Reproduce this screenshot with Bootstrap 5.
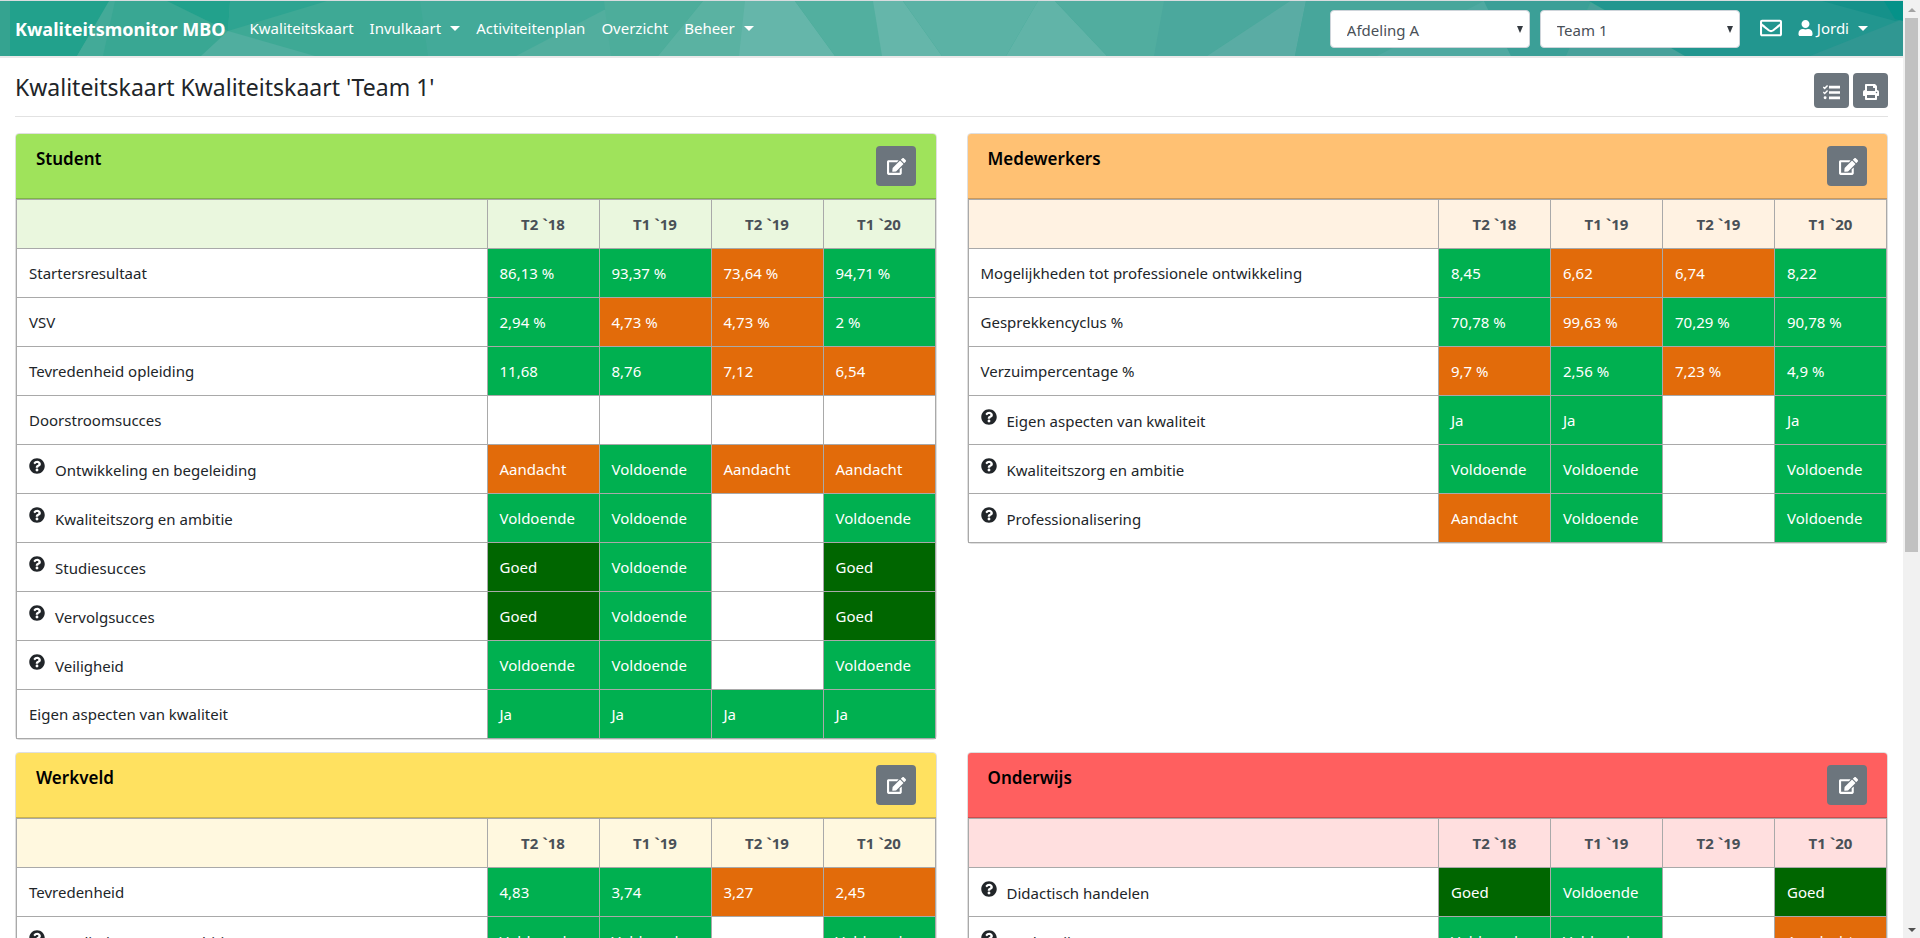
<!DOCTYPE html>
<html lang="nl">
<head>
<meta charset="utf-8">
<meta name="viewport" content="width=device-width, initial-scale=1">
<title>Kwaliteitsmonitor MBO</title>
<link href="https://cdn.jsdelivr.net/npm/bootstrap@5.3.0/dist/css/bootstrap.min.css" rel="stylesheet">
<style>
  body { font-family: "Noto Sans", "Open Sans", sans-serif; font-size: 15px; color: #212529; }
  .page-area { min-width: 0; overflow: hidden; }
  .topbar { background: #3ea995; border-top: 1px solid #d9dcdf; border-bottom: 2px solid #e9e9e9; padding: 9px 15px 8px; }
  .topbar-art { position: absolute; inset: 0; width: 100%; height: 100%; }
  .topbar .navbar-brand { font-size: 18px; line-height: 30px; font-weight: 700; padding: 0; margin-right: 24px; }
  .topbar .navbar-nav .nav-link { color: #fff; line-height: 24px; padding: 6px 0 8px; }
  .topbar .navbar-nav { gap: 16px; }
  .topbar .dropdown-toggle::after { border-width: 5px; border-bottom: 0; margin-left: 9px; vertical-align: 3px; }
  .user-icon { vertical-align: -2px; }
  .picker { width: 200px; height: 38px; padding: 2px 26px 0 16px; font-size: 15px; color: #495057; border-color: #ced4da; border-radius: 4px;
    background: #fff url("data:image/svg+xml,%3Csvg xmlns='http://www.w3.org/2000/svg' viewBox='0 0 6 7'%3E%3Cpath fill='%23343a40' d='M0 0h6L3 7z'/%3E%3C/svg%3E") no-repeat right 6px top 15px / 6px 7px; }
  .page-title { font-size: 23px; line-height: 28px; font-weight: 400; margin: 0; }
  .page-head { padding: 15px 0 8px; border-bottom: 1px solid #e2e2e2; }
  .btn-tool { width: 35px; height: 35px; border-radius: 4px; background: #6c757d; }
  .btn-edit { width: 40px; height: 40px; padding: 0 0 3px 2px; border-radius: 4px; background: #6c757d; }
  .board-row { --bs-gutter-x: 30px; }
  .board { border-color: #dfdfdf; border-radius: 4px; margin-bottom: 12px; }
  .board .card-header { height: 65px; padding: 12px 20px; color: #000; border-bottom: 1px solid rgba(0,0,0,.2); border-radius: 3px 3px 0 0; }
  .board h2 { font-size: 17px; line-height: 26px; font-weight: 600; margin: 0; }
  .score { table-layout: fixed; border-collapse: collapse; width: 100%; }
  .score th, .score td { height: 49px; padding: 0 12px; border: 1px solid #a9a9a9; }
  .score td { padding-top: 1px; }
  .score thead th { width: 112px; text-align: center; color: #495057; font-weight: 700; }
  .score thead td { width: auto; }
  .score .ok, .score .warn, .score .top { color: #fff; }
  .score .ok { background: #00b050; }
  .score .warn { background: #e26b0a; }
  .score .top { background: #006600; }
  .help { width: 16px; height: 16px; margin-right: 10px; vertical-align: 2px; }
  .tone-green .card-header { background: #9fe35b; }
  .tone-green thead { background: #eaf7de; }
  .tone-orange .card-header { background: #ffc173; }
  .tone-orange thead { background: #fff2e2; }
  .tone-yellow .card-header { background: #ffe160; }
  .tone-yellow thead { background: #fff8df; }
  .tone-red .card-header { background: #ff5f5f; }
  .tone-red thead { background: #ffdfdf; }
  .rail { width: 17px; padding: 1px 2px 0; background: #f1f1f1; }
  .rail-thumb { flex: 0 0 57%; background: #c1c1c1; }
</style>
</head>
<body>
<svg class="d-none" xmlns="http://www.w3.org/2000/svg">
  <symbol id="i-edit" viewBox="0 0 576 512"><path fill="currentColor" d="M402.600 83.200l90.200 90.200c3.800 3.800 3.800 10 0 13.800L274.400 405.600l-92.800 10.300c-12.400 1.400-22.900-9.100-21.500-21.500l10.300-92.800L388.800 83.200c3.800-3.800 10-3.800 13.800 0zm162-22.900l-48.800-48.800c-15.200-15.200-39.900-15.200-55.200 0l-35.400 35.400c-3.800 3.800-3.800 10 0 13.800l90.200 90.200c3.800 3.800 10 3.800 13.800 0l35.400-35.400c15.200-15.300 15.200-40 0-55.200zM384 346.200V448H64V128h229.800c3.200 0 6.200-1.300 8.500-3.500l40-40c7.600-7.600 2.200-20.500-8.500-20.500H48C21.500 64 0 85.500 0 112v352c0 26.500 21.500 48 48 48h352c26.500 0 48-21.500 48-48V306.200c0-10.700-12.900-16-20.500-8.500l-40 40c-2.200 2.300-3.500 5.300-3.500 8.500z"/></symbol>
  <symbol id="i-help" viewBox="0 0 512 512"><path fill="currentColor" d="M504 256c0 137-111 248-248 248S8 393 8 256 119 8 256 8s248 111 248 248zM262.700 90c-54.500 0-89.300 23-116.500 63.800-3.500 5.300-2.400 12.400 2.700 16.300l34.700 26.300c5.200 3.900 12.600 3 16.700-2.100 17.900-22.700 30.100-35.800 57.300-35.800 20.400 0 45.700 13.100 45.700 33 0 15-12.400 22.700-32.500 34C247.100 238.500 216 255 216 296v4c0 6.600 5.400 12 12 12h56c6.600 0 12-5.400 12-12v-1.300c0-28.700 83.800-29.900 83.800-107.500C379.800 132.800 319.200 90 262.700 90zM256 338c-25.400 0-46 20.600-46 46s20.600 46 46 46 46-20.600 46-46-20.600-46-46-46z"/></symbol>
</svg>

<div class="d-flex vh-100 overflow-hidden">
  <div class="page-area flex-grow-1">
    <nav class="topbar navbar navbar-dark navbar-expand position-relative">
      <svg class="topbar-art" viewBox="0 0 1903 55" preserveAspectRatio="none" aria-hidden="true">
        <path fill="#35a390" d="M0 0h12v55H0z"/>
        <path fill="#22a18c" d="M10 0h100L77 55H10z"/>
        <path fill="#43aa98" d="M109 0h7l-12 55H77z"/>
        <path fill="#39a793" d="M115 0h52l61 30-27 25h-98z"/>
        <path fill="#22a18c" d="M167 0h63l-2 30z"/>
        <path fill="#2ea491" d="M230 0h97L228 30z"/>
        <path fill="#50ae9f" d="M201 55l27-25 87 25z"/>
        <path fill="#43aa99" d="M420 0h190v55H428z"/>
        <path fill="#52ae9e" d="M516 55l88-46 40-9v55z"/>
        <path fill="#4dad9b" d="M604 0h99l-45 55h-47z"/>
        <path fill="#5ab2a2" d="M703 0h43l-6 55h-82z"/>
        <path fill="#65b6aa" d="M745 0h50l40 55h-96z"/>
        <path fill="#52af9f" d="M795 0h79l9 55h-48z"/>
        <path fill="#65b6aa" d="M873 0h30l39 55h-60z"/>
        <path fill="#5bb2a5" d="M903 0h135l-32 55h-64z"/>
        <path fill="#61b4a8" d="M1038 0h17l52 55h-101z"/>
        <path fill="#51ad9f" d="M1055 0h110l-10 55h-48z"/>
        <path fill="#4ba89d" d="M1164 0h126l-83 55h-53z"/>
        <path fill="#5aaca4" d="M1290 0h16l-11 55h-88z"/>
        <path fill="#47a69b" d="M1306 0h178l27 55h-216z"/>
        <path fill="#4fa9a1" d="M1377 55L1484 0l27 55z"/>
        <path fill="#3b9f97" d="M1484 0h107l-25 55h-55z"/>
        <path fill="#48a19b" d="M1566 55l25-53 94 53z"/>
        <path fill="#22968f" d="M1589 0h314v55h-218z"/>
        <path fill="#309792" d="M1810 55l93-37v37z"/>
        <path fill="#15918a" d="M1822 0h81v18l-8 2z"/>
        <path fill="#059289" d="M1884 0h19v20l-8-2z"/>
      </svg>
      <div class="d-flex w-100 align-items-center position-relative">
        <a class="navbar-brand" href="#">Kwaliteitsmonitor MBO</a>
        <ul class="navbar-nav me-auto">
          <li class="nav-item"><a class="nav-link" href="#">Kwaliteitskaart</a></li>
          <li class="nav-item dropdown"><a class="nav-link dropdown-toggle" href="#" data-bs-toggle="dropdown">Invulkaart</a></li>
          <li class="nav-item"><a class="nav-link" href="#">Activiteitenplan</a></li>
          <li class="nav-item"><a class="nav-link" href="#">Overzicht</a></li>
          <li class="nav-item dropdown"><a class="nav-link dropdown-toggle" href="#" data-bs-toggle="dropdown">Beheer</a></li>
        </ul>
        <select class="form-select picker" aria-label="Afdeling" style="margin-right: 10px"><option>Afdeling A</option></select>
        <select class="form-select picker me-3" aria-label="Team"><option>Team 1</option></select>
        <ul class="navbar-nav pe-3 me-1">
          <li class="nav-item ps-1"><a class="nav-link d-flex align-items-center" href="#" aria-label="Berichten">
            <svg width="22" height="24" viewBox="0 0 512 512"><path fill="#fff" d="M464 64H48C21.500 64 0 85.500 0 112v288c0 26.500 21.500 48 48 48h416c26.500 0 48-21.500 48-48V112c0-26.500-21.500-48-48-48zm0 48v40.800c-22.400 18.300-58.200 46.700-134.600 106.500-16.800 13.200-50.200 45.100-73.400 44.700-23.200.4-56.600-31.500-73.400-44.700C106.200 199.500 70.400 171.100 48 152.800V112h416zM48 400V214.400c22.900 18.300 55.400 43.900 104.900 82.600 21.900 17.200 60.200 55.200 103.100 55 42.700.2 80.500-37.200 103.100-54.900 49.500-38.800 82-64.400 104.900-82.700V400H48z"/></svg></a></li>
          <li class="nav-item dropdown"><a class="nav-link dropdown-toggle" href="#" data-bs-toggle="dropdown"><svg class="user-icon me-1" width="15" height="16" viewBox="0 0 448 512"><path fill="#fff" d="M224 256c70.700 0 128-57.300 128-128S294.700 0 224 0 96 57.300 96 128s57.300 128 128 128zm89.600 32h-16.700c-22.200 10.200-46.900 16-72.900 16s-50.600-5.800-72.900-16h-16.700C60.200 288 0 348.200 0 422.400V464c0 26.500 21.500 48 48 48h352c26.500 0 48-21.500 48-48v-41.600c0-74.200-60.200-134.400-134.400-134.400z"/></svg>Jordi</a></li>
        </ul>
      </div>
    </nav>

    <main class="container-fluid" style="--bs-gutter-x: 30px">
      <div class="page-head d-flex align-items-start mb-3">
        <h1 class="page-title me-auto">Kwaliteitskaart Kwaliteitskaart 'Team 1'</h1>
        <button type="button" class="btn btn-secondary btn-tool border-0 p-0 me-1" aria-label="Legenda">
          <svg width="17" height="17" viewBox="0 0 512 512"><path fill="none" stroke="#fff" stroke-width="44" d="M8 92l42 40 88-88M8 244l42 40 88-88"/><circle cx="64" cy="416" r="44" fill="#fff"/><path fill="#fff" d="M180 56h332v76H180zM180 218h332v76H180zM180 380h332v76H180z"/></svg></button>
        <button type="button" class="btn btn-secondary btn-tool border-0 p-0" aria-label="Afdrukken">
          <svg width="16" height="16" viewBox="0 0 512 512"><path fill="#fff" d="M448 192V77.300c0-8.500-3.400-16.600-9.400-22.600L393.400 9.400C387.400 3.400 379.200 0 370.700 0H96C78.300 0 64 14.300 64 32v160c-35.300 0-64 28.700-64 64v112c0 8.800 7.200 16 16 16h48v96c0 17.700 14.300 32 32 32h320c17.700 0 32-14.300 32-32v-96h48c8.800 0 16-7.200 16-16V256c0-35.300-28.700-64-64-64zm-64 256H128v-96h256v96zm0-224H128V64h192v48c0 8.800 7.200 16 16 16h48v96zm48 72c-13.300 0-24-10.800-24-24 0-13.300 10.700-24 24-24s24 10.700 24 24c0 13.300-10.700 24-24 24z"/></svg></button>
      </div>

      <div class="row board-row">
        <div class="col-6">
          <section class="card board tone-green">
            <div class="card-header d-flex justify-content-between"><h2>Student</h2>
              <button type="button" class="btn btn-secondary btn-edit border-0" aria-label="Student bewerken"><svg width="19" height="17"><use href="#i-edit"/></svg></button></div>
            <table class="score">
              <thead><tr><td></td><th>T2 `18</th><th>T1 `19</th><th>T2 `19</th><th>T1 `20</th></tr></thead>
              <tbody>
                <tr><td>Startersresultaat</td><td class="ok">86,13 %</td><td class="ok">93,37 %</td><td class="warn">73,64 %</td><td class="ok">94,71 %</td></tr>
                <tr><td>VSV</td><td class="ok">2,94 %</td><td class="warn">4,73 %</td><td class="warn">4,73 %</td><td class="ok">2 %</td></tr>
                <tr><td>Tevredenheid opleiding</td><td class="ok">11,68</td><td class="ok">8,76</td><td class="warn">7,12</td><td class="warn">6,54</td></tr>
                <tr><td>Doorstroomsucces</td><td></td><td></td><td></td><td></td></tr>
                <tr><td><svg class="help"><use href="#i-help"/></svg>Ontwikkeling en begeleiding</td><td class="warn">Aandacht</td><td class="ok">Voldoende</td><td class="warn">Aandacht</td><td class="warn">Aandacht</td></tr>
                <tr><td><svg class="help"><use href="#i-help"/></svg>Kwaliteitszorg en ambitie</td><td class="ok">Voldoende</td><td class="ok">Voldoende</td><td></td><td class="ok">Voldoende</td></tr>
                <tr><td><svg class="help"><use href="#i-help"/></svg>Studiesucces</td><td class="top">Goed</td><td class="ok">Voldoende</td><td></td><td class="top">Goed</td></tr>
                <tr><td><svg class="help"><use href="#i-help"/></svg>Vervolgsucces</td><td class="top">Goed</td><td class="ok">Voldoende</td><td></td><td class="top">Goed</td></tr>
                <tr><td><svg class="help"><use href="#i-help"/></svg>Veiligheid</td><td class="ok">Voldoende</td><td class="ok">Voldoende</td><td></td><td class="ok">Voldoende</td></tr>
                <tr><td>Eigen aspecten van kwaliteit</td><td class="ok">Ja</td><td class="ok">Ja</td><td class="ok">Ja</td><td class="ok">Ja</td></tr>
              </tbody>
            </table>
          </section>
        </div>
        <div class="col-6">
          <section class="card board tone-orange">
            <div class="card-header d-flex justify-content-between"><h2>Medewerkers</h2>
              <button type="button" class="btn btn-secondary btn-edit border-0" aria-label="Medewerkers bewerken"><svg width="19" height="17"><use href="#i-edit"/></svg></button></div>
            <table class="score">
              <thead><tr><td></td><th>T2 `18</th><th>T1 `19</th><th>T2 `19</th><th>T1 `20</th></tr></thead>
              <tbody>
                <tr><td>Mogelijkheden tot professionele ontwikkeling</td><td class="ok">8,45</td><td class="warn">6,62</td><td class="warn">6,74</td><td class="ok">8,22</td></tr>
                <tr><td>Gesprekkencyclus %</td><td class="ok">70,78 %</td><td class="warn">99,63 %</td><td class="ok">70,29 %</td><td class="ok">90,78 %</td></tr>
                <tr><td>Verzuimpercentage %</td><td class="warn">9,7 %</td><td class="ok">2,56 %</td><td class="warn">7,23 %</td><td class="ok">4,9 %</td></tr>
                <tr><td><svg class="help"><use href="#i-help"/></svg>Eigen aspecten van kwaliteit</td><td class="ok">Ja</td><td class="ok">Ja</td><td></td><td class="ok">Ja</td></tr>
                <tr><td><svg class="help"><use href="#i-help"/></svg>Kwaliteitszorg en ambitie</td><td class="ok">Voldoende</td><td class="ok">Voldoende</td><td></td><td class="ok">Voldoende</td></tr>
                <tr><td><svg class="help"><use href="#i-help"/></svg>Professionalisering</td><td class="warn">Aandacht</td><td class="ok">Voldoende</td><td></td><td class="ok">Voldoende</td></tr>
              </tbody>
            </table>
          </section>
        </div>
        <div class="col-6">
          <section class="card board tone-yellow">
            <div class="card-header d-flex justify-content-between"><h2>Werkveld</h2>
              <button type="button" class="btn btn-secondary btn-edit border-0" aria-label="Werkveld bewerken"><svg width="19" height="17"><use href="#i-edit"/></svg></button></div>
            <table class="score">
              <thead><tr><td></td><th>T2 `18</th><th>T1 `19</th><th>T2 `19</th><th>T1 `20</th></tr></thead>
              <tbody>
                <tr><td>Tevredenheid</td><td class="ok">4,83</td><td class="ok">3,74</td><td class="warn">3,27</td><td class="warn">2,45</td></tr>
                <tr><td><svg class="help"><use href="#i-help"/></svg>Kwaliteitszorg en ambitie</td><td class="ok">Voldoende</td><td class="ok">Voldoende</td><td></td><td class="ok">Voldoende</td></tr>
              </tbody>
            </table>
          </section>
        </div>
        <div class="col-6">
          <section class="card board tone-red">
            <div class="card-header d-flex justify-content-between"><h2>Onderwijs</h2>
              <button type="button" class="btn btn-secondary btn-edit border-0" aria-label="Onderwijs bewerken"><svg width="19" height="17"><use href="#i-edit"/></svg></button></div>
            <table class="score">
              <thead><tr><td></td><th>T2 `18</th><th>T1 `19</th><th>T2 `19</th><th>T1 `20</th></tr></thead>
              <tbody>
                <tr><td><svg class="help"><use href="#i-help"/></svg>Didactisch handelen</td><td class="top">Goed</td><td class="ok">Voldoende</td><td></td><td class="top">Goed</td></tr>
                <tr><td><svg class="help"><use href="#i-help"/></svg>Onderwijsproces</td><td class="ok">Voldoende</td><td class="ok">Voldoende</td><td></td><td class="warn">Aandacht</td></tr>
              </tbody>
            </table>
          </section>
        </div>
      </div>
    </main>
  </div>

  <div class="rail flex-shrink-0 d-flex flex-column" aria-hidden="true">
    <svg class="flex-shrink-0" width="13" height="17" viewBox="0 0 13 17"><path fill="#a3a3a3" d="M3 11l4-4 4 4z"/></svg>
    <div class="rail-thumb"></div>
    <svg class="mt-auto flex-shrink-0" width="13" height="17" viewBox="0 0 13 17"><path fill="#505050" d="M3 7h8l-4 4z"/></svg>
  </div>
</div>
<script src="https://cdn.jsdelivr.net/npm/bootstrap@5.3.0/dist/js/bootstrap.bundle.min.js"></script>
</body>
</html>
